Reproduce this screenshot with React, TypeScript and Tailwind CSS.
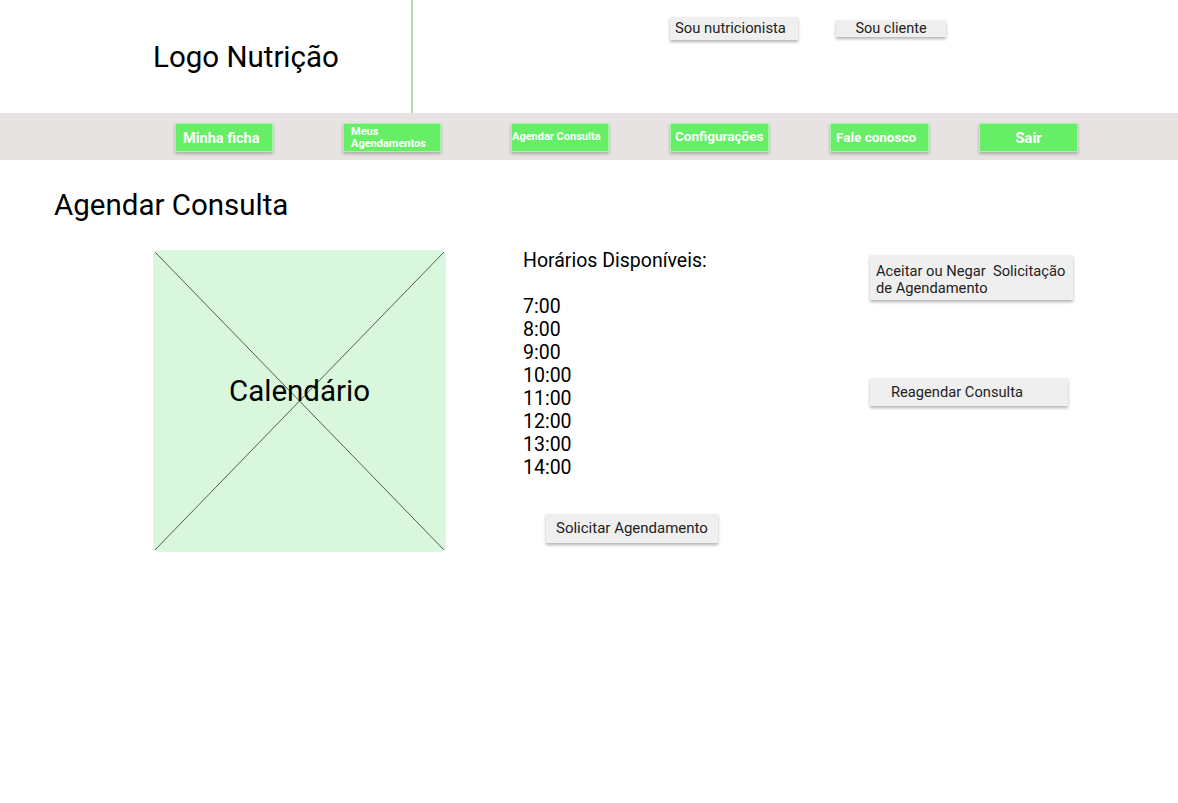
import React from 'react';

const navItems = [
  { label: 'Minha ficha', pos: 'ml-[175px] w-[98px]', text: 'text-[14.5px] justify-start pl-[7px] pt-[2px]' },
  { label: 'Meus Agendamentos', pos: 'ml-[70px] w-[98px]', text: 'text-[11px] leading-[12px] justify-start pl-[7px] w-[70px]' },
  { label: 'Agendar Consulta', pos: 'ml-[70px] w-[98px]', text: 'text-[11px] justify-start pl-0' },
  { label: 'Configurações', pos: 'ml-[61px] w-[99px]', text: 'text-[13.5px] justify-start pl-[4px] -mt-[2px]' },
  { label: 'Fale conosco', pos: 'ml-[61px] w-[99px]', text: 'text-[13.5px] justify-start pl-[5px]' },
  { label: 'Sair', pos: 'ml-[50px] w-[99px]', text: 'text-[15px] justify-center pt-[2px]' },
];

const horarios = ['7:00', '8:00', '9:00', '10:00', '11:00', '12:00', '13:00', '14:00'];

const GreyButton: React.FC<{ className?: string; children: React.ReactNode }> = ({ className, children }) => (
  <div className={`bg-[#efefef] text-[#222] shadow-[0_2px_3px_rgba(0,0,0,0.3)] ${className ?? ''}`}>{children}</div>
);

export default function App() {
  return (
    <div className="w-[1178px] h-[803px] bg-white font-['Roboto',sans-serif] text-black overflow-hidden">
      {/* header */}
      <div className="flex h-[113px]">
        <div className="w-[411px] flex items-center pl-[153px] pt-[3px]">
          <span className="text-[29.5px] leading-none">Logo Nutrição</span>
        </div>
        <div className="w-[2px] h-full bg-[#b9d9b0]"></div>
        <div className="flex items-start">
          <GreyButton className="ml-[257px] mt-[17px] w-[128px] h-[23px] text-[14.8px] pl-[5px] flex items-center">
            Sou nutricionista
          </GreyButton>
          <GreyButton className="ml-[38px] mt-[20px] w-[110px] h-[17px] text-[14.5px] flex items-center justify-center">
            Sou cliente
          </GreyButton>
        </div>
      </div>

      {/* nav */}
      <div className="h-[47px] bg-[#e8e3e3] flex items-start pt-[10px]">
        {navItems.map(item => (
          <div
            key={item.label}
            className={`${item.pos} h-[29px] bg-[#66ee66] border border-[#a8f5a8] shadow-[0_2px_3px_rgba(0,0,0,0.25)] flex items-center text-white font-bold`}
          >
            <span className={`flex w-full ${item.text}`}>{item.label}</span>
          </div>
        ))}
      </div>

      {/* main */}
      <div className="pl-[54px] pt-[27px]">
        <h1 className="text-[29.5px] leading-[36px]">Agendar Consulta</h1>
      </div>

      <div className="flex mt-[27px]">
        <div className="relative ml-[153px] w-[293px] h-[302px] bg-[#d9f7dc] rounded-[7px] overflow-hidden flex items-center justify-center">
          <svg className="absolute inset-0" width="293" height="302" viewBox="0 0 293 302">
            <line x1="0" y1="0" x2="293" y2="302" stroke="#333" strokeWidth="0.8" />
            <line x1="293" y1="0" x2="0" y2="302" stroke="#333" strokeWidth="0.8" />
          </svg>
          <span className="relative text-[29.5px] -mt-[20px]">Calendário</span>
        </div>

        <div className="ml-[77px] w-[347px] flex flex-col">
          <p className="text-[19.5px] leading-[22px]">Horários Disponíveis:</p>
          <div className="mt-[23px] flex flex-col">
            {horarios.map(h => (
              <span key={h} className="text-[19.5px] leading-[23px]">{h}</span>
            ))}
          </div>
          <GreyButton className="ml-[23px] mt-[35px] w-[172px] h-[29px] text-[15px] pl-[10px] flex items-center">
            Solicitar Agendamento
          </GreyButton>
        </div>

        <div className="flex flex-col">
          <GreyButton className="mt-[5px] w-[203px] h-[45px] text-[14.7px] leading-[17px] pl-[6px] pt-[8px]">
            Aceitar ou Negar&nbsp; Solicitação
            <br />
            de Agendamento
          </GreyButton>
          <GreyButton className="mt-[78px] w-[198px] h-[28px] text-[14.7px] pl-[21px] flex items-center">
            Reagendar Consulta
          </GreyButton>
        </div>
      </div>
    </div>
  );
}
